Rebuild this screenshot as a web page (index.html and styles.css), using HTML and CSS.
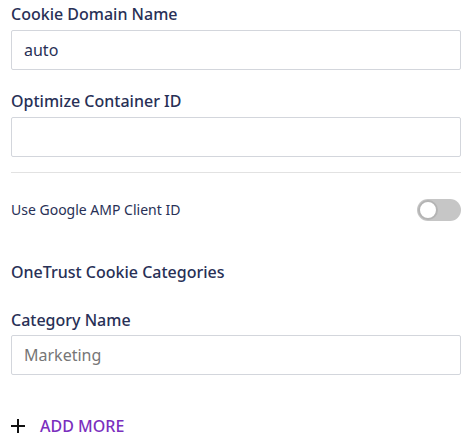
FILE: index.html
```html
<!DOCTYPE html>
<html>
<head>
<meta charset="utf-8">
<link rel="stylesheet" href="styles.css">
</head>
<body>
<div class="panel">
  <div class="field first">
    <div class="label">Cookie Domain Name</div>
    <div class="input">auto</div>
  </div>
  <div class="field">
    <div class="label">Optimize Container ID</div>
    <div class="input"></div>
  </div>
  <div class="divider"></div>
  <div class="toggle-row">
    <span class="toggle-label">Use Google AMP Client ID</span>
    <span class="toggle"><span class="knob"></span></span>
  </div>
  <div class="section-title">OneTrust Cookie Categories</div>
  <div class="field cat">
    <div class="label">Category Name</div>
    <div class="input placeholder">Marketing</div>
  </div>
  <div class="add-more">
    <svg class="plus" width="14" height="14" viewBox="0 0 14 14"><path d="M7 0V14M0 7H14" stroke="#111" stroke-width="2"/></svg>
    <span>ADD MORE</span>
  </div>
</div>
</body>
</html>
```
FILE: styles.css
```css
html, body {
  margin: 0;
  padding: 0;
  background: #fff;
}
.panel {
  font-family: "Noto Sans", sans-serif;
  color: #283056;
  padding: 4px 6px 0 11px;
}
.field {
  display: flex;
  flex-direction: column;
  gap: 6px;
  margin-top: 21px;
}
.field.first {
  margin-top: 0;
}
.field.cat {
  margin-top: 28px;
  gap: 5px;
}
.label {
  font-size: 16px;
  line-height: 20px;
  font-weight: 500;
}
.input {
  box-sizing: border-box;
  height: 40px;
  border: 1px solid #d3d6dc;
  border-radius: 2px;
  padding: 0 12px;
  font-size: 16px;
  line-height: 38px;
  color: #283056;
}
.input.placeholder {
  color: #767676;
}
.divider {
  height: 1px;
  background: #e2e2e2;
  margin-top: 15px;
}
.toggle-row {
  display: flex;
  align-items: center;
  justify-content: space-between;
  margin-top: 26px;
  height: 22px;
}
.toggle-label {
  font-size: 14px;
  line-height: 18px;
}
.toggle {
  position: relative;
  width: 44px;
  height: 22px;
  border-radius: 11px;
  background: #c6c6c6;
}
.knob {
  position: absolute;
  left: 1px;
  top: 1px;
  box-sizing: border-box;
  width: 20px;
  height: 20px;
  border-radius: 50%;
  background: #fff;
  border: 2px solid #b4b4b4;
}
.section-title {
  margin-top: 41px;
  font-size: 16px;
  line-height: 20px;
  font-weight: 500;
}
.add-more {
  display: flex;
  align-items: center;
  margin-top: 40px;
  height: 22px;
}
.plus {
  margin-right: 15px;
}
.add-more span {
  color: #7b2fbe;
  font-size: 16px;
  font-weight: 500;
  line-height: 22px;
}
```
